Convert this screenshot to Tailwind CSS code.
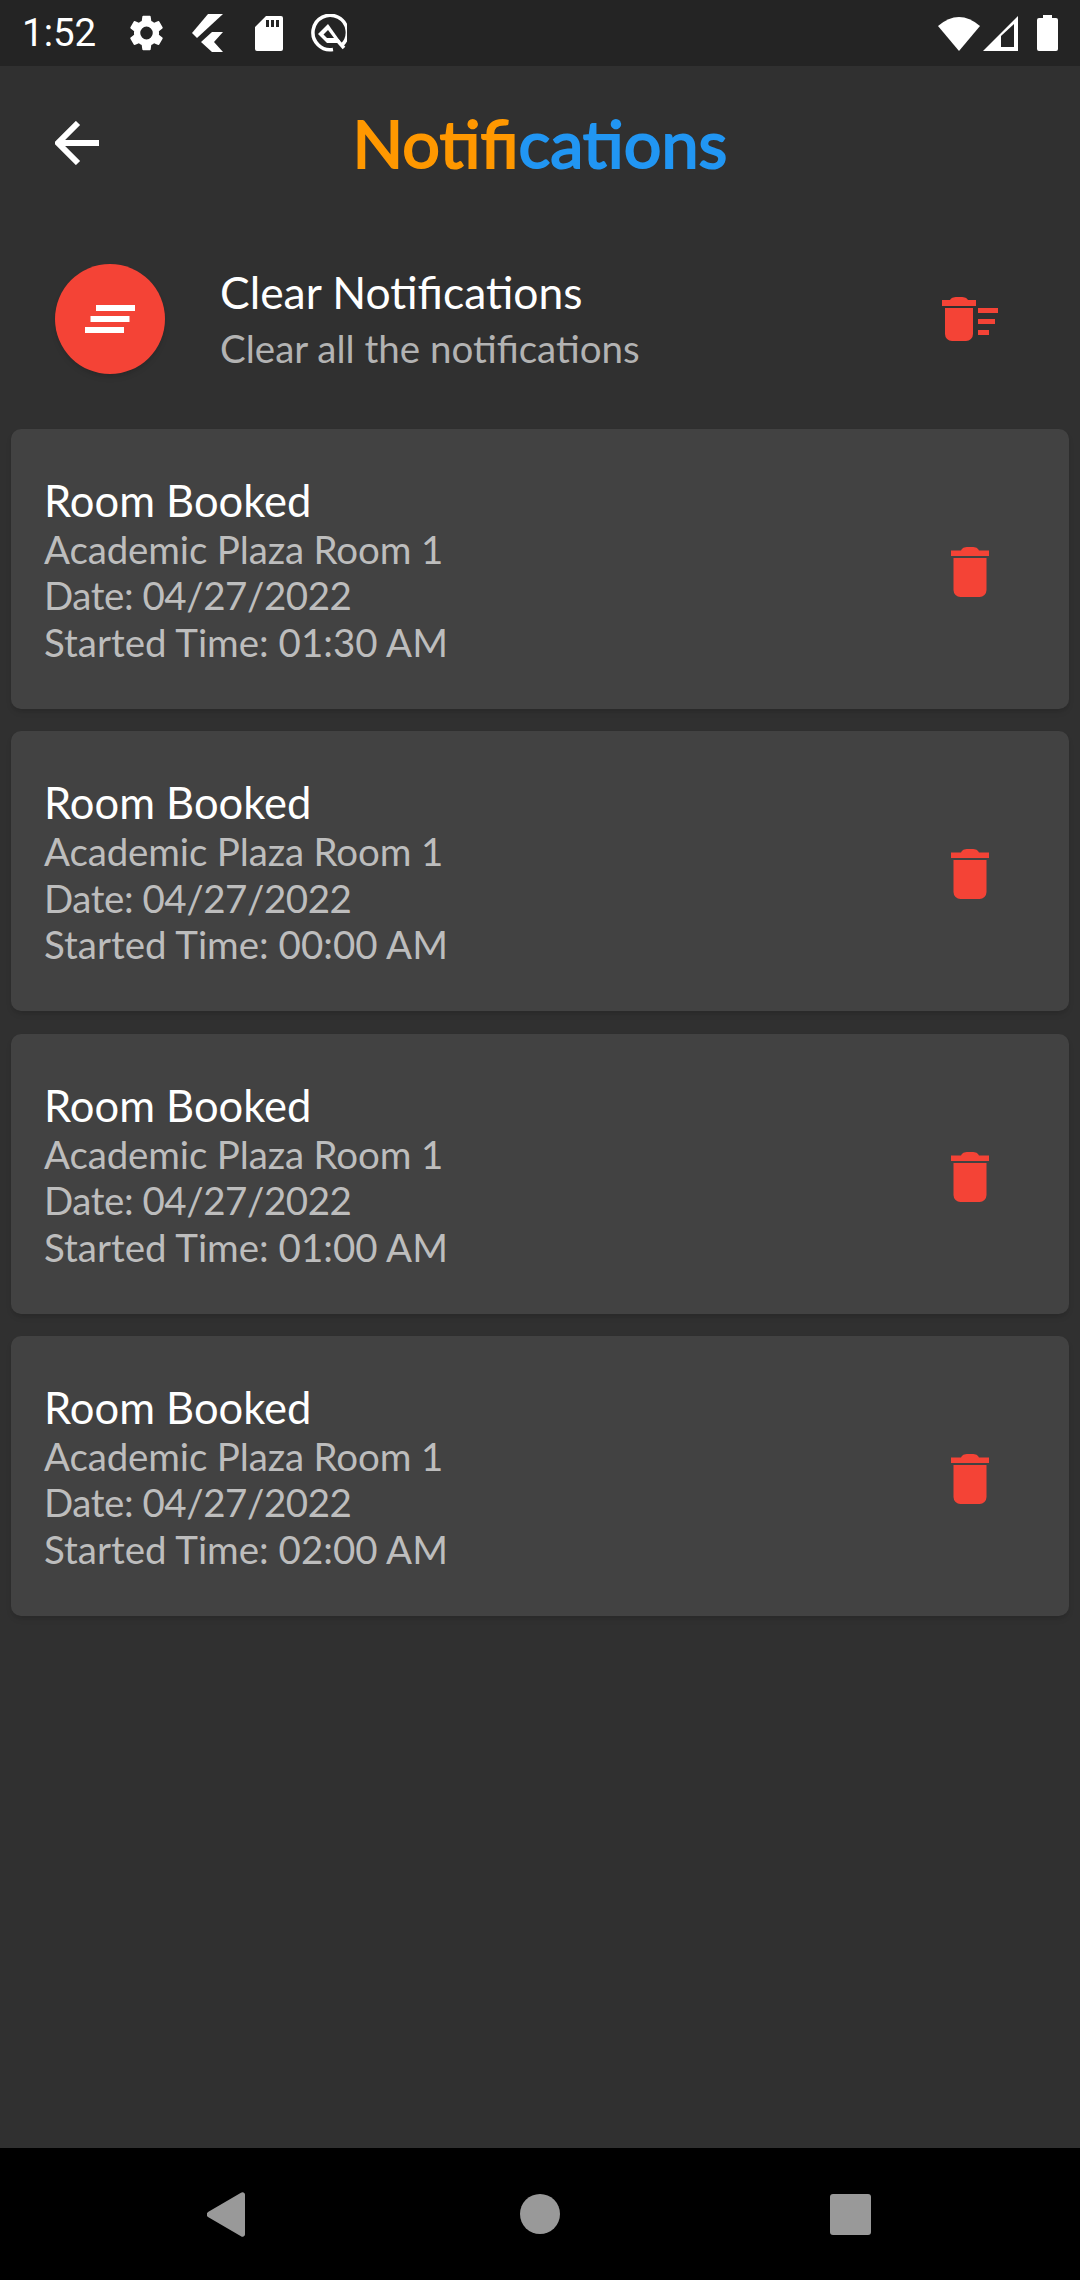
<!DOCTYPE html>
<html><head><meta charset="utf-8">
<script src="https://cdn.jsdelivr.net/npm/@tailwindcss/browser@4"></script>
</head>
<body class="m-0">
<div class="w-[1080px] h-[2280px] flex flex-col bg-[#303030] font-['Lato',sans-serif] overflow-hidden">
  <div class="h-[66px] bg-[#242424] flex items-center justify-between pl-[22px] pr-[22px] shrink-0">
    <div class="flex items-center">
      <span class="font-['Roboto',sans-serif] text-[38.500px] text-white leading-none w-[108px]">1:52</span>
      <svg class="w-[33px] h-[36px]" viewBox="2.500 2 19 20" preserveAspectRatio="none" fill="#fff"><path d="M19.140 12.940c.04-.3.06-.61.06-.94 0-.32-.02-.64-.07-.94l2.030-1.580a.49.49 0 0 0 .12-.61l-1.920-3.320a.49.49 0 0 0-.59-.22l-2.390.96c-.5-.38-1.030-.7-1.620-.94l-.36-2.540a.48.48 0 0 0-.48-.41h-3.840a.48.48 0 0 0-.47.41l-.36 2.540c-.59.24-1.130.57-1.620.94l-2.390-.96a.49.49 0 0 0-.59.22L2.740 8.870c-.12.21-.08.47.12.61l2.030 1.580c-.05.3-.09.63-.09.94s.02.64.07.94l-2.030 1.580a.49.49 0 0 0-.12.61l1.920 3.320c.12.22.37.29.59.22l2.390-.96c.5.38 1.030.7 1.620.94l.36 2.540c.05.24.24.41.48.41h3.840c.24 0 .44-.17.47-.41l.36-2.540c.59-.24 1.130-.56 1.620-.94l2.390.96c.22.08.47 0 .59-.22l1.920-3.320c.12-.22.07-.47-.12-.61l-2.010-1.580zM12 15.600A3.600 3.600 0 1 1 12 8.400a3.600 3.600 0 0 1 0 7.200z"/></svg>
      <svg class="ml-[29px] w-[32px] h-[39px]" viewBox="0 0 32 39" fill="#fff"><path d="M16 0h15L5 24 0 19z"/><path d="M20 18h11L22 28l9 10H20L9 28z"/></svg>
      <svg class="ml-[31px] w-[28px] h-[35px]" viewBox="0 0 28 35" fill="#fff"><path d="M11 0h15a2 2 0 0 1 2 2v31a2 2 0 0 1-2 2H2a2 2 0 0 1-2-2V11z M11 4v7h3V4z M16 4v7h3V4z M21 4v7h3V4z" fill-rule="evenodd"/></svg>
      <svg class="ml-[26px] w-[38px] h-[38px]" viewBox="0 0 38 38" fill="none" stroke="#fff"><path d="M33 31A17.200 17.200 0 1 0 24 35.500" stroke-width="3.500"/><path d="M35 34 28 26" stroke-width="3.500"/><path d="M19 10 9 20l9 9h12l1-2-12-17z" fill="#fff" stroke="none"/><path d="M19 16l-4.500 4.500 3.500 3.500h7z" fill="#242424" stroke="none"/></svg>
    </div>
    <div class="flex items-center">
      <svg class="w-[42px] h-[35px]" viewBox="0 0 42 35" fill="#fff"><path d="M0 10Q21-8 42 10L21 35z"/></svg>
      <svg class="ml-[3px] w-[35px] h-[35px]" viewBox="0 0 35 35"><path d="M35 0v35H0z" fill="#fff"/><path d="M31 8v23H18V20z" fill="#242424"/></svg>
      <svg class="ml-[19px] w-[21px] h-[36px]" viewBox="0 0 21 36" fill="#fff"><path d="M6 0h9v3h4a2 2 0 0 1 2 2v29a2 2 0 0 1-2 2H2a2 2 0 0 1-2-2V5a2 2 0 0 1 2-2h4z"/></svg>
    </div>
  </div>

  <div class="h-[154px] relative flex items-center justify-center shrink-0">
    <svg class="absolute left-[55px] top-[55px] w-[44px] h-[44px]" viewBox="0 0 44 44" fill="none" stroke="#fff" stroke-width="6"><path d="M44 22H3M23 2 3 22l20 20"/></svg>
    <h1 class="text-[66.500px] font-normal leading-none [-webkit-text-stroke:2px] mt-[-2px]"><span class="text-[#ff9800]">Notifi</span><span class="text-[#2196f3]">cations</span></h1>
  </div>

  <div class="h-[198px] flex items-center pl-[55px] pr-[82px] shrink-0">
    <div class="w-[110px] h-[110px] rounded-full bg-[#f44336] shadow-md flex items-center justify-center shrink-0">
      <svg class="w-[50px] h-[28px]" viewBox="0 0 50 28" fill="#fff"><path d="M11 0h39v6H11zM5.500 11h39v6h-39zM0 22h39v6H0z"/></svg>
    </div>
    <div class="ml-[55px] flex-1 mt-[3px]">
      <div class="text-white text-[44.400px] leading-[54px]">Clear Notifications</div>
      <div class="text-[#b3b3b3] text-[38.500px] leading-[56px] mt-[1px]">Clear all the notifications</div>
    </div>
    <svg class="w-[56px] h-[44px]" viewBox="0 0 56 44" fill="#f44336"><path d="M3 11h28v26a7 7 0 0 1-7 7H10a7 7 0 0 1-7-7zM0 3h8C10 0 12 0 17 0s7 0 9 3h8v6H0zM36 11h20v5H36zM36 22h17v5H36zM36 33h11v5H36z"/></svg>
  </div>

  <div class="flex flex-col gap-[22.400px] px-[11px] mt-[11px]">
    <div class="h-[280px] rounded-[10px] bg-[#424242] shadow-md flex items-center pl-[33px] pr-[80px]">
      <div class="flex-1 mt-[1px]">
        <div class="text-white text-[43.500px] leading-[52px]">Room Booked</div>
        <div class="text-[#bdbdbd] text-[38.500px] leading-[46.500px] tracking-[-0.14px]">Academic Plaza Room 1</div>
        <div class="text-[#bdbdbd] text-[38.500px] leading-[46.500px] tracking-[-0.45px]">Date: 04/27/2022</div>
        <div class="text-[#bdbdbd] text-[38.500px] leading-[46.500px]">Started Time: 01:30 AM</div>
      </div>
      <svg class="w-[38px] h-[50px] mt-[6px]" viewBox="0 0 38 50" fill="#f44336"><path d="M2.500 11h33v32a7 7 0 0 1-7 7h-19a7 7 0 0 1-7-7zM0 3.500h10C12 0 14 0 19 0s7 0 9 3.500h10v5.500H0z"/></svg>
    </div>
    <div class="h-[280px] rounded-[10px] bg-[#424242] shadow-md flex items-center pl-[33px] pr-[80px]">
      <div class="flex-1 mt-[1px]">
        <div class="text-white text-[43.500px] leading-[52px]">Room Booked</div>
        <div class="text-[#bdbdbd] text-[38.500px] leading-[46.500px] tracking-[-0.14px]">Academic Plaza Room 1</div>
        <div class="text-[#bdbdbd] text-[38.500px] leading-[46.500px] tracking-[-0.45px]">Date: 04/27/2022</div>
        <div class="text-[#bdbdbd] text-[38.500px] leading-[46.500px]">Started Time: 00:00 AM</div>
      </div>
      <svg class="w-[38px] h-[50px] mt-[6px]" viewBox="0 0 38 50" fill="#f44336"><path d="M2.500 11h33v32a7 7 0 0 1-7 7h-19a7 7 0 0 1-7-7zM0 3.500h10C12 0 14 0 19 0s7 0 9 3.500h10v5.500H0z"/></svg>
    </div>
    <div class="h-[280px] rounded-[10px] bg-[#424242] shadow-md flex items-center pl-[33px] pr-[80px]">
      <div class="flex-1 mt-[1px]">
        <div class="text-white text-[43.500px] leading-[52px]">Room Booked</div>
        <div class="text-[#bdbdbd] text-[38.500px] leading-[46.500px] tracking-[-0.14px]">Academic Plaza Room 1</div>
        <div class="text-[#bdbdbd] text-[38.500px] leading-[46.500px] tracking-[-0.45px]">Date: 04/27/2022</div>
        <div class="text-[#bdbdbd] text-[38.500px] leading-[46.500px]">Started Time: 01:00 AM</div>
      </div>
      <svg class="w-[38px] h-[50px] mt-[6px]" viewBox="0 0 38 50" fill="#f44336"><path d="M2.500 11h33v32a7 7 0 0 1-7 7h-19a7 7 0 0 1-7-7zM0 3.500h10C12 0 14 0 19 0s7 0 9 3.500h10v5.500H0z"/></svg>
    </div>
    <div class="h-[280px] rounded-[10px] bg-[#424242] shadow-md flex items-center pl-[33px] pr-[80px]">
      <div class="flex-1 mt-[1px]">
        <div class="text-white text-[43.500px] leading-[52px]">Room Booked</div>
        <div class="text-[#bdbdbd] text-[38.500px] leading-[46.500px] tracking-[-0.14px]">Academic Plaza Room 1</div>
        <div class="text-[#bdbdbd] text-[38.500px] leading-[46.500px] tracking-[-0.45px]">Date: 04/27/2022</div>
        <div class="text-[#bdbdbd] text-[38.500px] leading-[46.500px]">Started Time: 02:00 AM</div>
      </div>
      <svg class="w-[38px] h-[50px] mt-[6px]" viewBox="0 0 38 50" fill="#f44336"><path d="M2.500 11h33v32a7 7 0 0 1-7 7h-19a7 7 0 0 1-7-7zM0 3.500h10C12 0 14 0 19 0s7 0 9 3.500h10v5.500H0z"/></svg>
    </div>
  </div>

  <div class="mt-auto h-[132px] bg-black flex items-center relative shrink-0">
    <svg class="absolute left-[207px] top-[44px] w-[38px] h-[45px]" viewBox="0 0 38 45" fill="#999"><path d="M34 .7a2.500 2.500 0 0 1 4 1.800v40a2.500 2.500 0 0 1-4 1.800L1 25a3.500 3.500 0 0 1 0-5z"/></svg>
    <div class="absolute left-[520px] top-[46px] w-[40px] h-[40px] rounded-full bg-[#999]"></div>
    <div class="absolute left-[830px] top-[46px] w-[41px] h-[41px] rounded-[3px] bg-[#999]"></div>
  </div>
</div>
</body></html>
